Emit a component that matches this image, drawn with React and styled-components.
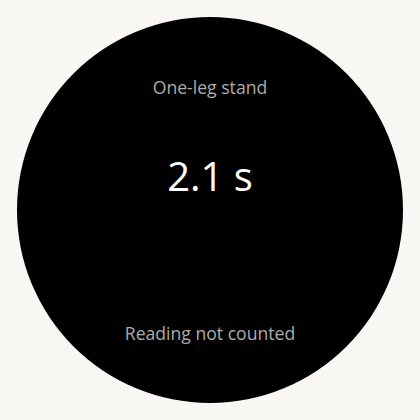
import React from "react"
import styled, { createGlobalStyle } from "styled-components"

const GlobalStyle = createGlobalStyle`
  html, body {
    margin: 0;
    padding: 0;
    background: #f8f7f4;
  }
  body {
    font-family: "Open Sans", "Noto Sans", sans-serif;
  }
`

const Page = styled.div`
  width: 420px;
  height: 420px;
  display: flex;
  align-items: center;
  justify-content: center;
`

const Dial = styled.div`
  width: 386px;
  height: 386px;
  border-radius: 50%;
  background: #000;
  display: flex;
  flex-direction: column;
  align-items: center;
  box-sizing: border-box;
  padding: 60px 0 60px;
`

const Label = styled.div`
  color: #acacac;
  font-size: 17.6px;
  line-height: 20px;
`

const Value = styled.div`
  margin-top: 54px;
  color: #fff;
  font-size: 40px;
  line-height: 50px;
`

const Spacer = styled.div`
  flex: 1;
`

const App = () => {
  return (
    <>
      <GlobalStyle />
      <Page>
        <Dial>
          <Label>One-leg stand</Label>
          <Value>2.1 s</Value>
          <Spacer />
          <Label>Reading not counted</Label>
        </Dial>
      </Page>
    </>
  )
}

export default App
